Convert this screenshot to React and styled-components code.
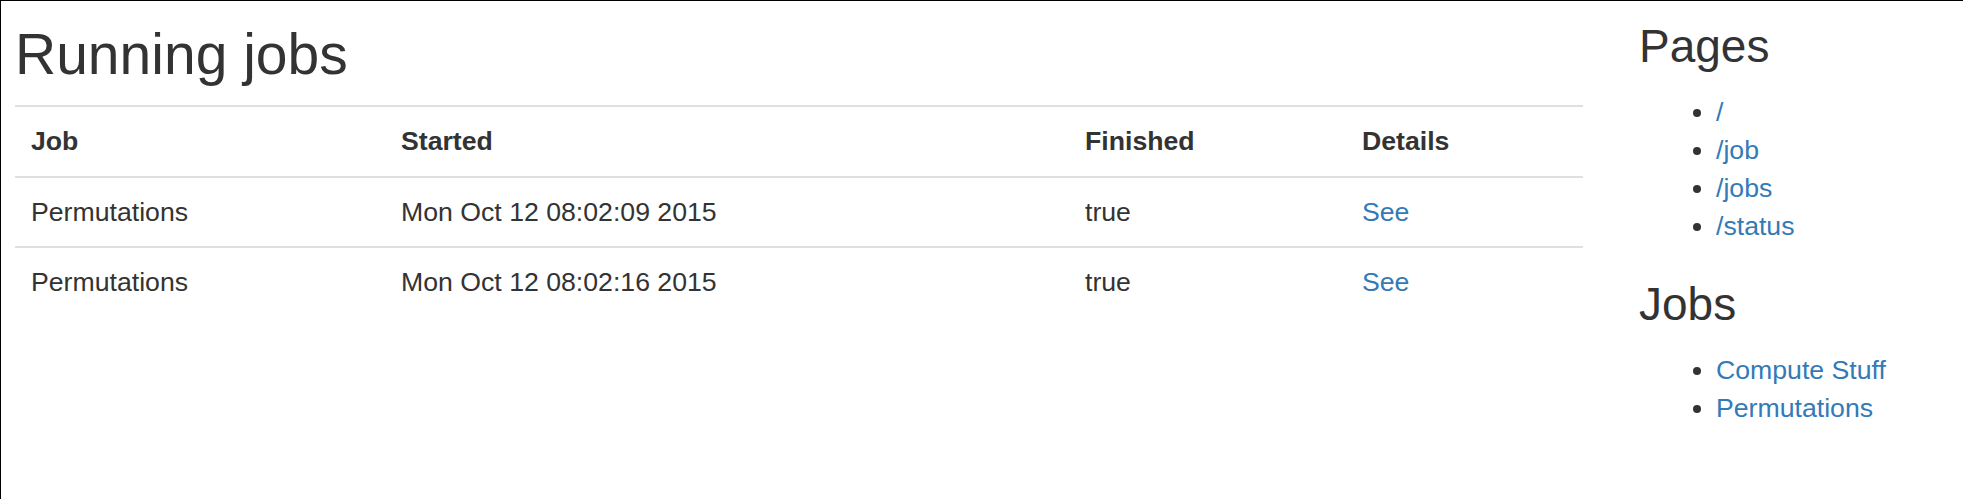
import React from "react";
import styled, { createGlobalStyle } from "styled-components";

const GlobalStyle = createGlobalStyle`
  html, body {
    margin: 0;
    padding: 0;
    background: #fff;
  }
  body {
    font-family: "Liberation Sans", Arial, Helvetica, sans-serif;
    font-size: 26.67px;
    line-height: 38px;
    color: #333;
  }
`;

const Frame = styled.div`
  border-top: 1px solid #000;
  border-left: 1px solid #000;
  min-height: 499px;
  box-sizing: border-box;
  display: flex;
  align-items: flex-start;
  gap: 56px;
  padding-left: 14px;
`;

const Main = styled.main`
  width: 1568px;
  flex: none;
`;

const Title = styled.h1`
  margin: 21.6px 0 20px;
  font-size: 57px;
  line-height: 62.7px;
  font-weight: 400;
  color: #333;
`;

const Table = styled.table`
  width: 100%;
  border-collapse: collapse;
  table-layout: fixed;
`;

const HeadCell = styled.th`
  text-align: left;
  font-weight: 700;
  padding: 15px 16px 15.5px;
  border-top: 2px solid #e0e0e0;
`;

const Cell = styled.td`
  padding: 15px 16px;
  border-top: 2px solid #e0e0e0;
  vertical-align: top;
`;

const Link = styled.a`
  color: #337ab7;
  text-decoration: none;
`;

const Sidebar = styled.aside`
  flex: none;
  width: 300px;
`;

const SideHeading = styled.h2`
  margin: 17.8px 0 18.8px;
  font-size: 46px;
  line-height: 55.2px;
  font-weight: 400;
  color: #333;
`;

const NavList = styled.ul`
  margin: 0 0 32px;
  padding-left: 77px;
  list-style: disc;
`;

const NavItem = styled.li`
  line-height: 38px;
`;

const jobs = [
  { name: "Permutations", started: "Mon Oct 12 08:02:09 2015", finished: "true" },
  { name: "Permutations", started: "Mon Oct 12 08:02:16 2015", finished: "true" },
];

const pages = ["/", "/job", "/jobs", "/status"];
const jobLinks = ["Compute Stuff", "Permutations"];

export default function App() {
  return (
    <>
      <GlobalStyle />
      <Frame>
        <Main>
          <Title>Running jobs</Title>
          <Table>
            <colgroup>
              <col style={{ width: 370 }} />
              <col style={{ width: 684 }} />
              <col style={{ width: 277 }} />
              <col style={{ width: 237 }} />
            </colgroup>
            <thead>
              <tr>
                <HeadCell>Job</HeadCell>
                <HeadCell>Started</HeadCell>
                <HeadCell>Finished</HeadCell>
                <HeadCell>Details</HeadCell>
              </tr>
            </thead>
            <tbody>
              {jobs.map((j, i) => (
                <tr key={i}>
                  <Cell>{j.name}</Cell>
                  <Cell>{j.started}</Cell>
                  <Cell>{j.finished}</Cell>
                  <Cell>
                    <Link href="#">See</Link>
                  </Cell>
                </tr>
              ))}
            </tbody>
          </Table>
        </Main>
        <Sidebar>
          <SideHeading>Pages</SideHeading>
          <NavList>
            {pages.map((p) => (
              <NavItem key={p}>
                <Link href="#">{p}</Link>
              </NavItem>
            ))}
          </NavList>
          <SideHeading>Jobs</SideHeading>
          <NavList>
            {jobLinks.map((p) => (
              <NavItem key={p}>
                <Link href="#">{p}</Link>
              </NavItem>
            ))}
          </NavList>
        </Sidebar>
      </Frame>
    </>
  );
}
